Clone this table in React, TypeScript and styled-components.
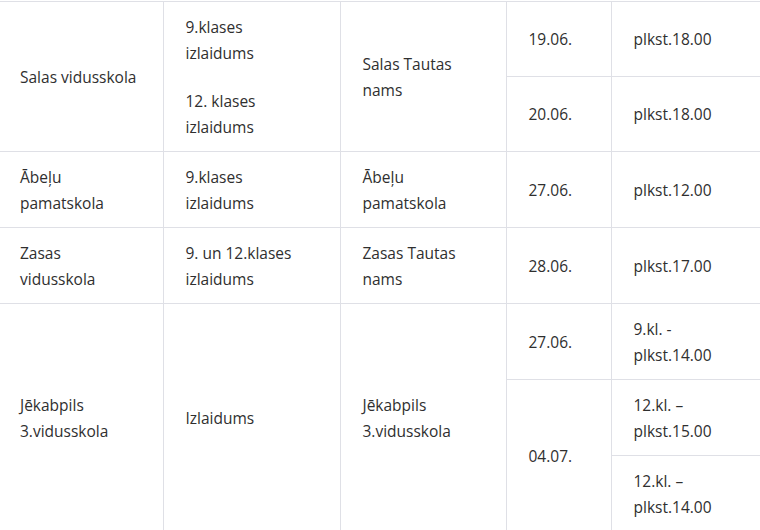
import React from "react";
import styled, { createGlobalStyle } from "styled-components";

const Global = createGlobalStyle`
  html, body { margin: 0; padding: 0; background: #ffffff; overflow: hidden; }
  body { font-family: "Open Sans", "Noto Sans", sans-serif; }
`;

const Wrap = styled.div`
  padding-top: 1px;
  width: 760px;
`;

const Table = styled.table`
  border-collapse: collapse;
  table-layout: fixed;
  width: 760px;
  font-size: 15.5px;
  font-weight: 500;
  line-height: 26px;
  color: #2f2f2f;
`;

const Cell = styled.td<{ $first?: boolean; $last?: boolean }>`
  border-top: 1px solid #dfe0e6;
  border-bottom: 1px solid #dfe0e6;
  border-left: ${(p) => (p.$first ? "none" : "1px solid #dfe0e6")};
  border-right: ${(p) => (p.$last ? "none" : "1px solid #dfe0e6")};
  padding: 11.5px 22px 11.5px ${(p) => (p.$first ? "20px" : "22px")};
  vertical-align: middle;
  text-align: left;
`;

const Para = styled.p`
  margin: 0;
  & + & { margin-top: 22px; }
`;

type Col = { w: number };
const cols: Col[] = [{ w: 163 }, { w: 177 }, { w: 166 }, { w: 105 }, { w: 149 }];

export default function App() {
  return (
    <Wrap>
      <Global />
      <Table>
        <colgroup>
          {cols.map((c, i) => (
            <col key={i} style={{ width: c.w }} />
          ))}
        </colgroup>
        <tbody>
          <tr>
            <Cell $first rowSpan={2}>Salas vidusskola</Cell>
            <Cell rowSpan={2}>
              <Para>9.klases<br />izlaidums</Para>
              <Para>12. klases<br />izlaidums</Para>
            </Cell>
            <Cell rowSpan={2}>Salas Tautas<br />nams</Cell>
            <Cell>19.06.</Cell>
            <Cell $last>plkst.18.00</Cell>
          </tr>
          <tr>
            <Cell>20.06.</Cell>
            <Cell $last>plkst.18.00</Cell>
          </tr>
          <tr>
            <Cell $first>Ābeļu<br />pamatskola</Cell>
            <Cell>9.klases<br />izlaidums</Cell>
            <Cell>Ābeļu<br />pamatskola</Cell>
            <Cell>27.06.</Cell>
            <Cell $last>plkst.12.00</Cell>
          </tr>
          <tr>
            <Cell $first>Zasas<br />vidusskola</Cell>
            <Cell>9. un 12.klases<br />izlaidums</Cell>
            <Cell>Zasas Tautas<br />nams</Cell>
            <Cell>28.06.</Cell>
            <Cell $last>plkst.17.00</Cell>
          </tr>
          <tr>
            <Cell $first rowSpan={3}>Jēkabpils<br />3.vidusskola</Cell>
            <Cell rowSpan={3}>Izlaidums</Cell>
            <Cell rowSpan={3}>Jēkabpils<br />3.vidusskola</Cell>
            <Cell>27.06.</Cell>
            <Cell $last>9.kl. -<br />plkst.14.00</Cell>
          </tr>
          <tr>
            <Cell rowSpan={2}>04.07.</Cell>
            <Cell $last>12.kl. –<br />plkst.15.00</Cell>
          </tr>
          <tr>
            <Cell $last>12.kl. –<br />plkst.14.00</Cell>
          </tr>
        </tbody>
      </Table>
    </Wrap>
  );
}
